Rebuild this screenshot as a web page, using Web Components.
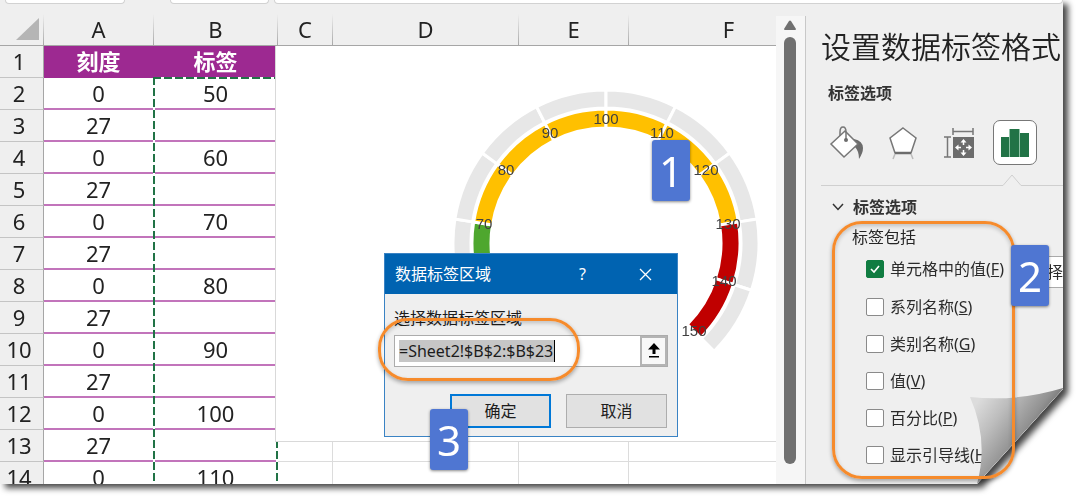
<!DOCTYPE html>
<html lang="zh-CN">
<head>
<meta charset="utf-8">
<title>设置数据标签格式</title>
<style>
  html, body { margin: 0; height: 100%; background: #fff; overflow: hidden; }
  body { font-family: "Noto Sans", "Noto Sans CJK SC", sans-serif; color: #262626; }
</style>
</head>
<body>
<tutorial-figure>
  <app-window>
    <work-sheet slot="sheet">
      <gauge-chart slot="chart"></gauge-chart>
      <range-dialog slot="dialog" heading="数据标签区域" label="选择数据标签区域" value="=Sheet2!$B$2:$B$23"></range-dialog>
    </work-sheet>
    <scroll-track slot="scroll"></scroll-track>
    <format-pane slot="pane" heading="设置数据标签格式">
      <check-option checked first key="F" text="单元格中的值"><button slot="extra">择</button></check-option>
      <check-option key="S" text="系列名称"></check-option>
      <check-option key="G" text="类别名称"></check-option>
      <check-option key="V" text="值"></check-option>
      <check-option key="P" text="百分比"></check-option>
      <check-option key="H" text="显示引导线"></check-option>
    </format-pane>
  </app-window>
  <focus-ring class="range"></focus-ring>
  <focus-ring class="options"></focus-ring>
  <step-badge class="one">1</step-badge>
  <step-badge class="two">2</step-badge>
  <step-badge class="three">3</step-badge>
</tutorial-figure>

<script>
const define = (name, render) => customElements.define(name, class extends HTMLElement {
  connectedCallback() {
    if (this.shadowRoot) return;
    this.attachShadow({ mode: 'open' }).innerHTML = render(this);
  }
});

/* Page holder: the window plus the annotations that lie over it */
define('tutorial-figure', () => `
<style>
  :host { display: block; position: relative; height: 100vh; box-sizing: border-box; padding: 0 17px 17px 0; }
  ::slotted(focus-ring), ::slotted(step-badge) { position: absolute; }
  ::slotted(.range) { left: 378px; top: 318px; width: 202px; height: 63px; }
  ::slotted(.options) { right: 65px; top: 221px; width: 183px; height: 258px; }
  ::slotted(.one) { left: 652px; top: 140px; }
  ::slotted(.two) { right: 31px; top: 245px; }
  ::slotted(.three) { left: 430px; top: 409px; }
</style>
<slot></slot>`);

define('step-badge', () => `
<style>
  :host { display: flex; align-items: center; justify-content: center; width: 38px; height: 61px;
    border-radius: 3px; background: #4f76d2; color: #fff; font-size: 42px; line-height: 60px;
    box-shadow: 0 1px 3px #0007; }
</style>
<slot></slot>`);

define('focus-ring', () => `
<style>
  :host { display: block; box-sizing: border-box; border: 3px solid #f68b2c; border-radius: 30px;
    box-shadow: 0 2px 4px #0005, inset 0 2px 4px #0003; pointer-events: none; }
</style>`);

/* Application window with a peeled bottom-right corner */
define('app-window', () => `
<style>
  :host { display: block; height: 100%; filter: drop-shadow(5px 4px 3px #000b); }
  .page { position: relative; height: 100%; display: flex; flex-direction: column; background: #efefef;
    overflow: hidden; clip-path: polygon(0 0, 100% 0, 100% calc(100% - 95px), calc(100% - 86px) 100%, 0 100%); }
  .bars { display: flex; height: 14px; flex: none; padding-left: 5px; }
  .bars span { height: 3px; background: #fff; border: 1px solid #d2d2d2; border-top: 0; border-radius: 0 0 6px 6px; }
  .name { width: 118px; margin-right: 45px; }
  .tools { width: 97px; margin-right: 5px; }
  .formula { flex: 1; }
  .main { display: flex; flex: 1; min-height: 0; }
  ::slotted(work-sheet) { flex: 1; min-width: 0; }
  ::slotted(scroll-track) { flex: none; }
  ::slotted(format-pane) { flex: none; }
  .curl { position: absolute; right: 0; bottom: 0; }
</style>
<div class="page">
  <div class="bars"><span class="name"></span><span class="tools"></span><span class="formula"></span></div>
  <div class="main"><slot name="sheet"></slot><slot name="scroll"></slot><slot name="pane"></slot></div>
  <svg class="curl" width="94" height="96" viewBox="0 0 94 96" aria-hidden="true">
    <defs>
      <linearGradient id="peel" x1="4" y1="20" x2="62" y2="62" gradientUnits="userSpaceOnUse">
        <stop offset="0" stop-color="#dcdcdc"/><stop offset=".35" stop-color="#bdbdbd"/>
        <stop offset=".75" stop-color="#929292"/><stop offset="1" stop-color="#666"/>
      </linearGradient>
    </defs>
    <path d="M1 9Q48 14 94 0L94 1L8 96Q20 52 1 9Z" fill="url(#peel)"/>
  </svg>
</div>`);

/* Grid of cells */
define('work-sheet', () => {
  const cols = ['A', 'B', 'C', 'D', 'E', 'F'];
  const rows = Array.from({ length: 14 }, (_, i) => {
    const n = i + 1;
    const a = n === 1 ? '刻度' : (n % 2 ? '27' : '0');
    const b = n === 1 ? '标签' : (n % 2 ? '' : String(50 + (n - 2) * 5));
    const cls = n === 1 ? 'title' : 'data';
    return `<tr><th scope="row">${n}</th><td class="${cls}">${a}</td><td class="${cls}">${b}</td><td></td><td></td><td></td><td></td></tr>`;
  }).join('');
  return `
<style>
  :host { display: block; position: relative; overflow: hidden; }
  table { table-layout: fixed; width: 829px; border-collapse: separate; border-spacing: 0; font-size: 22px; line-height: 28px; }
  th, td { box-sizing: border-box; height: 32px; padding: 0 1px 2px 0; text-align: center; font-weight: 400; color: #222; }
  thead th { background: linear-gradient(#efefef, #a8a8a8) right / 1px 100% no-repeat #efefef; border-bottom: 1px solid #a6a6a6; }
  thead svg { display: block; margin: 2px 0 0 16px; }
  tbody th { background: #efefef; border-right: 1px solid #a6a6a6; border-bottom: 1px solid #c4c4c4; padding-right: 5px; }
  td { background: #fff; border-bottom: 1px solid #dcdcdc; border-right: 1px solid #dcdcdc; }
  td.data { border-bottom: 2px solid #c274bb; border-right: 0; padding-bottom: 1px; }
  td.title { background: #9d2991; color: #fff; font-weight: 700; border: 0; }
  .ants { position: absolute; left: 153px; top: 63px; width: 125px; height: 480px; box-sizing: border-box;
    background:
      repeating-linear-gradient(90deg, #217346 0 8px, #fff 8px 11px) 0 0 / 100% 2px no-repeat,
      repeating-linear-gradient(#217346 0 8px, #fff 8px 11px) 0 0 / 2px 100% no-repeat,
      repeating-linear-gradient(#217346 0 8px, #fff 8px 11px) 100% 0 / 2px 100% no-repeat; }
  ::slotted(gauge-chart) { position: absolute; left: 275px; right: 0; top: 32px; }
  ::slotted(range-dialog) { position: absolute; left: 384px; top: 239px; }
</style>
<table>
  <colgroup><col style="width:44px"><col style="width:110px"><col style="width:124px"><col style="width:55px"><col style="width:186px"><col style="width:110px"><col style="width:200px"></colgroup>
  <thead><tr><th><svg width="24" height="23" aria-hidden="true"><path d="M23 0V22H0Z" fill="#b5b5b5"/></svg></th>${cols.map(c => `<th scope="col">${c}</th>`).join('')}</tr></thead>
  <tbody>${rows}</tbody>
</table>
<div class="ants"></div>
<slot name="chart"></slot>
<slot name="dialog"></slot>`;
});

/* Gauge: 0 degrees is at the top, one step of the scale is 27 degrees */
define('gauge-chart', () => {
  const cx = 330, cy = 197;
  const pt = (r, deg) => {
    const t = deg * Math.PI / 180;
    return `${(cx + r * Math.sin(t)).toFixed(2)} ${(cy - r * Math.cos(t)).toFixed(2)}`;
  };
  const ring = (r0, r1, a, b, fill) =>
    `<path fill="${fill}" stroke="#fff" stroke-width="3" d="M${pt(r1, a)}A${r1} ${r1} 0 0 1 ${pt(r1, b)}L${pt(r0, b)}A${r0} ${r0} 0 0 0 ${pt(r0, a)}Z"/>`;
  let arcs = '', texts = '';
  for (let i = 0; i < 10; i++) {
    const a = -135 + i * 27, v = 50 + i * 10;
    arcs += ring(135, 153, a, a + 27, '#e7e7e7');
    arcs += ring(115, 134, a, a + 27, v < 70 ? '#4ea72e' : v < 130 ? '#ffc000' : '#c00000');
  }
  for (let i = 2; i <= 10; i++) {
    const [x, y] = pt(124, -135 + i * 27).split(' ');
    texts += `<text x="${Math.round(x)}" y="${Math.round(y) + 5}">${50 + i * 10}</text>`;
  }
  return `
<style>
  :host { display: block; box-sizing: border-box; height: 396px; background: #fff; border: solid #d9d9d9; border-width: 0 0 1px 1px; }
  svg { display: block; }
  text { font: 15px "Liberation Sans", sans-serif; fill: #404040; text-anchor: middle; }
</style>
<svg width="500" height="394" role="img" aria-label="仪表盘">${arcs}${texts}</svg>`;
});

define('range-dialog', el => `
<style>
  :host { display: block; box-sizing: border-box; width: 294px; border: 1px solid #3a83c4; background: #efefef; font-size: 16px; line-height: 20px; color: #1c1c1c; }
  button { font: inherit; color: inherit; padding: 0; box-sizing: border-box; }
  header { display: flex; align-items: center; height: 40px; padding-left: 10px; background: #0063b1; color: #fff; }
  h2 { flex: 1; margin: 0; font-size: 16px; font-weight: 400; }
  header button { width: 63px; height: 40px; border: 0; background: none; display: grid; place-items: center; }
  form { padding: 14px 9px 8px; }
  label { display: block; margin-bottom: 7px; }
  .field { display: flex; align-items: center; box-sizing: border-box; height: 32px; border: 1px solid #acacac; background: #fff; padding-left: 4px; }
  input { field-sizing: content; box-sizing: border-box; height: 22px; border: 0; border-right: 1px solid #000; outline: 0; padding: 0 1px 0 0; background: #c6c6c6; font: inherit; color: #1c1c1c; }
  .pick { margin-left: auto; width: 27px; height: 30px; border: 2px solid #b4b4b4; background: #f8f8f8; display: grid; place-items: center; }
  .actions { display: flex; justify-content: flex-end; gap: 15px; margin-top: 27px; padding-right: 1px; }
  .actions button { width: 101px; height: 34px; background: #e1e1e1; border: 1px solid #adadad; }
  .actions .ok { border: 2px solid #0078d7; }
</style>
<header><h2>${el.getAttribute('heading')}</h2><button>?</button><button aria-label="关闭"><svg width="13" height="13"><path d="M1 1L12 12M12 1L1 12" stroke="#fff" stroke-width="1.3"/></svg></button></header>
<form onsubmit="return false">
  <label for="ref">${el.getAttribute('label')}</label>
  <div class="field"><input id="ref" value="${el.getAttribute('value')}"><button type="button" class="pick" aria-label="折叠"><svg width="14" height="16"><path d="M7 0L13 6.500H8.500V11H5.500V6.500H1ZM2 13H12V14.500H2Z"/></svg></button></div>
  <div class="actions"><button class="ok">确定</button><button type="button">取消</button></div>
</form>`);

define('scroll-track', () => `
<style>
  :host { display: flex; flex-direction: column; align-items: center; box-sizing: border-box; width: 29px; margin-top: 2px; padding: 4px 1px 20px 0; gap: 7px; background: #f6f6f6; }
  svg { flex: none; display: block; }
  .thumb { width: 12px; flex: 1; border-radius: 6px; background: #707070; }
</style>
<svg width="12" height="10" aria-hidden="true"><path d="M5 1Q6 0 7 1L12 9Q12 10 11 10H1Q0 10 0 9Z" fill="#707070"/></svg>
<div class="thumb"></div>`);

define('format-pane', el => `
<style>
  :host { display: block; box-sizing: border-box; width: 258px; margin-top: 2px; padding: 13px 0 0 15px; border-left: 1px solid #c8c8c8; background: #efefef; overflow: hidden; font-size: 16px; line-height: 20px; }
  h1 { margin: 0; font-size: 30px; line-height: 36px; font-weight: 350; white-space: nowrap; color: #222; }
  h2 { margin: 18px 0 0 7px; font-size: 16px; line-height: 20px; font-weight: 600; color: #333; }
  nav { display: flex; gap: 12px; margin-top: 17px; padding-left: 4px; }
  nav button { width: 44px; height: 45px; padding: 0; border: 0; background: none; display: grid; place-items: center; }
  nav button.on { border: 1px solid #777; border-radius: 7px; background: #fff; }
  .rule { display: flex; align-items: flex-end; margin-top: 9px; }
  .rule i { height: 1px; width: 182px; background: #cfcfcf; }
  .rule i:last-child { flex: 1; width: auto; }
  .rule svg { display: block; }
  h3 { display: flex; align-items: center; gap: 9px; margin: 11px 0 0 11px; font-size: 16px; line-height: 20px; font-weight: 700; color: #333; }
  p { margin: 10px 0 2px 31px; }
</style>
<h1>${el.getAttribute('heading')}</h1>
<h2>标签选项</h2>
<nav>
  <button aria-label="填充与线条"><svg width="36" height="34" viewBox="0 0 36 34">
    <path d="M25 13Q34 15 34 22Q34 27 30 33Q30 25 26 21Z" fill="#6c6c6c"/>
    <path d="M16 5L29 18L15 31L2 18Z" fill="#fff" stroke="#777" stroke-width="1.500"/>
    <path d="M11 10V6Q11 1 14 1Q17 1 17 6V14" fill="none" stroke="#777" stroke-width="1.500"/><circle cx="17" cy="14" r="2" fill="#6c6c6c"/>
  </svg></button>
  <button aria-label="效果"><svg width="32" height="34" viewBox="0 0 32 34">
    <path d="M16 2L29 12L24 27H8L3 12Z" fill="#fff" stroke="#777" stroke-width="1.500"/>
    <path d="M8 27H24" stroke="#6c6c6c" stroke-width="2.500"/><path d="M8 28L6 33M24 28L26 33" stroke="#bbb" stroke-width="1.500"/>
  </svg></button>
  <button aria-label="大小与属性"><svg width="32" height="32" viewBox="0 0 32 32">
    <path d="M10 10H31V31H10Z" fill="#6c6c6c"/>
    <path d="M10 4.500H30M10 1V8M30 1V8M4.500 10V30M1 10H8M1 30H8" fill="none" stroke="#777" stroke-width="1.500"/>
    <path d="M20.500 18V14M20.500 23V27M18 20.500H14M23 20.500H27" stroke="#fff" stroke-width="1.500"/>
    <path d="M20.500 12L23.500 15.500H17.500ZM20.500 29L17.500 25.500H23.500ZM12 20.500L15.500 17.500V23.500ZM29 20.500L25.500 23.500V17.500Z" fill="#fff"/>
  </svg></button>
  <button class="on" aria-label="标签选项"><svg width="28" height="30" viewBox="0 0 28 30">
    <path d="M0 9H8V29H0ZM9 1H18V29H9ZM19 5H28V29H19Z" fill="#217346"/><path d="M8.500 1V29M18.500 1V29" stroke="#8fc3a6"/>
  </svg></button>
</nav>
<div class="rule"><i></i><svg width="18" height="12"><path d="M0 11.500L9 1L18 11.500" fill="none" stroke="#cfcfcf"/></svg><i></i></div>
<h3><svg width="12" height="8" aria-hidden="true"><path d="M1 1L6 6.500L11 1" fill="none" stroke="#333" stroke-width="1.500"/></svg>标签选项</h3>
<p>标签包括</p>
<slot></slot>`);

define('check-option', el => `
<style>
  :host { display: flex; align-items: center; height: 37px; margin-left: 45px; white-space: nowrap; font-size: 16px; line-height: 20px; color: #2b2b2b; }
  :host([first]) { height: 39px; }
  label { display: flex; align-items: center; gap: 6px; }
  input { appearance: none; flex: none; box-sizing: border-box; width: 18px; height: 18px; margin: 0; border: 1px solid #8a8a8a; border-radius: 2px; background: #fff; }
  input:checked { border-color: #107c41; background: #107c41 url("data:image/svg+xml,%3Csvg xmlns='http://www.w3.org/2000/svg' viewBox='0 0 16 16'%3E%3Cpath d='M4 8l3 3 5-6' fill='none' stroke='white' stroke-width='1.6'/%3E%3C/svg%3E") center / 16px no-repeat; }
  ::slotted(button) { align-self: flex-end; flex: none; box-sizing: border-box; width: 44px; height: 32px; margin-left: 16px; padding: 0 0 0 26px; border: 1px solid #aaa; background: #fff; font: inherit; color: inherit; text-align: left; }
</style>
<label><input type="checkbox" ${el.hasAttribute('checked') ? 'checked' : ''}><span>${el.getAttribute('text')}(<u>${el.getAttribute('key')}</u>)</span></label>
<slot name="extra"></slot>`);
</script>
</body>
</html>
